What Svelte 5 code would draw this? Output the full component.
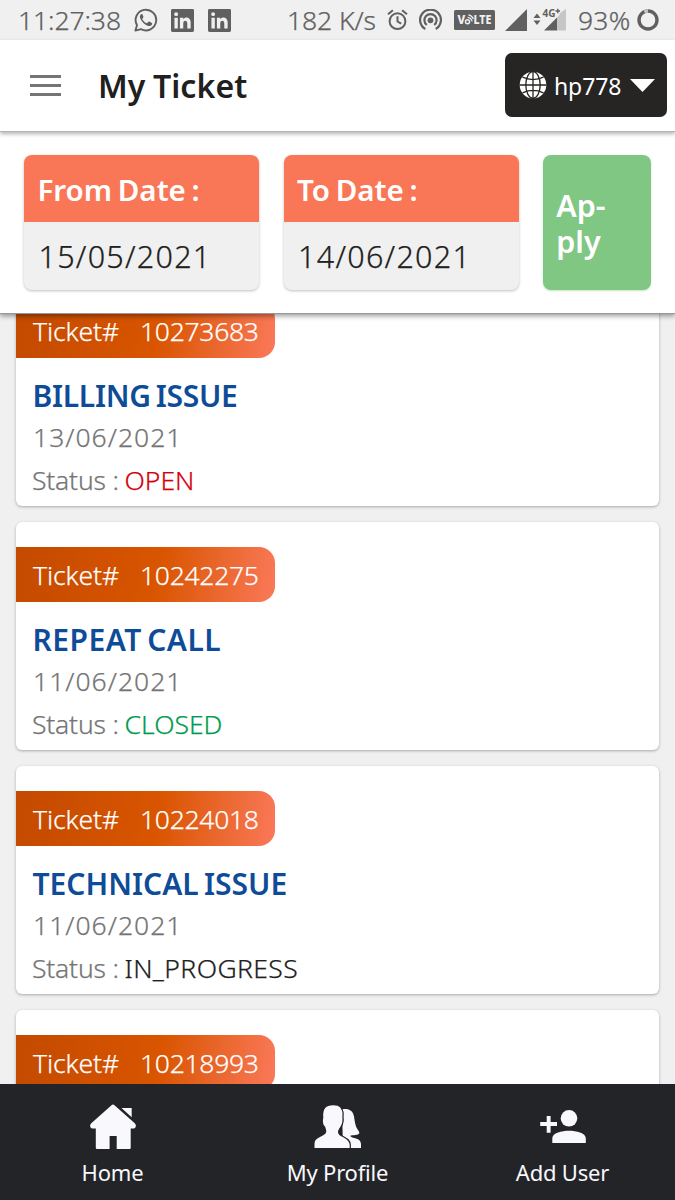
<script>
  const tickets = [
    { id: '10273683', title: 'BILLING ISSUE', date: '13/06/2021', status: 'OPEN', kind: 'open', fit: 'billing' },
    { id: '10242275', title: 'REPEAT CALL', date: '11/06/2021', status: 'CLOSED', kind: 'closed', fit: 'repeat' },
    { id: '10224018', title: 'TECHNICAL ISSUE', date: '11/06/2021', status: 'IN_PROGRESS', kind: 'progress', fit: 'technical' },
    { id: '10218993' }
  ];
</script>

{#snippet linkedin()}
  <svg class="linkedin" width="23" height="23" viewBox="0 0 24 24">
    <path fill="#606060" fill-rule="evenodd" d="M1.5 0h21A1.5 1.5 0 0 1 24 1.500v21a1.500 1.500 0 0 1-1.500 1.500h-21A1.500 1.500 0 0 1 0 22.500v-21A1.500 1.500 0 0 1 1.500 0zM3.600 9v11.400h3.500V9zM5.350 3.300a2.050 2.050 0 1 0 0 4.100 2.050 2.050 0 0 0 0-4.100zM9.300 9v11.400h3.500v-5.600c0-3.500 4.200-3.400 4.200 0v5.600h3.500v-6.600c0-5.600-5.700-6.200-7.700-3.200V9z" />
  </svg>
{/snippet}

<div class="screen">
  <div class="statusbar">
    <span class="time">11:27:38</span>
    <svg class="whatsapp" width="24" height="24" viewBox="0 0 24 24">
      <path d="M1.400 22.600 3 17.200A10.300 10.300 0 1 1 7 21.100Z" fill="none" stroke="#606060" stroke-width="1.900" stroke-linejoin="round" />
      <path d="M8.500 6.400c-.5-.5-1.100-.4-1.600.1-1 1-1.300 2.300-.7 3.800 1.500 3.700 4.300 6.300 7.900 7.600 1.500.5 3.100-.2 3.800-1.500.3-.7.3-1.200 0-1.500l-2.600-1.300c-.4-.2-.7-.1-1 .2l-1 1.200c-.2.300-.5.300-.9.100-1.800-.8-3-2-4-3.600-.2-.4-.1-.6.100-.9l.8-1c.2-.3.200-.5.100-.8z" fill="#606060" />
    </svg>
    {@render linkedin()}
    {@render linkedin()}
    <span class="speed">182 K/s</span>
    <svg class="alarm" width="21" height="22" viewBox="0 0 21 22" fill="none" stroke="#606060">
      <circle cx="10.500" cy="12.200" r="7.900" stroke-width="2" />
      <path d="M10.500 7.300v5.200l3.700 2.200M1 5.300 5.900 1.200M20 5.300 15.100 1.200" stroke-width="2" />
    </svg>
    <svg class="hotspot" width="23" height="22" viewBox="0 0 23 22">
      <g fill="none" stroke="#606060" stroke-width="2.200">
        <path d="M6.300 20A10.400 10.400 0 1 1 16.700 20" />
        <path d="M7.800 16A6.100 6.100 0 1 1 15.200 16" />
      </g>
      <circle cx="11.500" cy="11.300" r="2.900" fill="#606060" />
    </svg>
    <svg class="volte" width="41" height="20" viewBox="0 0 41 20">
      <rect width="41" height="20" rx="1.500" fill="#606060" />
      <g fill="#f0f0f0" font-family="Noto Sans, sans-serif" font-weight="800" font-size="11.500">
        <text x="3.500" y="14.200">V</text>
        <text x="19.500" y="14.200" textLength="18" lengthAdjust="spacingAndGlyphs">LTE</text>
      </g>
      <circle cx="13.500" cy="11.700" r="2" fill="none" stroke="#f0f0f0" stroke-width="1.500" />
      <path d="M13.500 7.300q3.800.3 4.600 4.200M14.500 4.800q3.500.6 4.900 4.200" fill="none" stroke="#f0f0f0" stroke-width="1.200" />
    </svg>
    <svg class="signal" width="22" height="22" viewBox="0 0 22 22"><path d="M0 22 22 0v22z" fill="#606060" /></svg>
    <svg class="mobile" width="34" height="24" viewBox="0 0 34 24">
      <path d="M.5 11 4 6.500 7.500 11zM.5 13.500h7L4 18z" fill="#606060" />
      <path d="M24 10.500 26.500 8V6.500L31.500 3 33 1.500v22h-9z" fill="#c6c6c6" />
      <path d="M11 23.500 24 10.500v13z" fill="#606060" />
      <text x="9.500" y="9.500" textLength="13" lengthAdjust="spacingAndGlyphs" font-family="Noto Sans, sans-serif" font-weight="700" font-size="10" fill="#606060">4G</text>
      <path d="M22.500 4h4.600M24.800 1.700v4.600" stroke="#606060" stroke-width="1.400" />
    </svg>
    <span class="battery">93%</span>
    <svg class="ring" width="22" height="22" viewBox="0 0 22 22" fill="none" stroke-width="3.400">
      <circle cx="11" cy="11" r="9" stroke="#606060" />
      <path d="M7.300 2.800A9 9 0 0 1 11 2" stroke="#c2c2c2" />
    </svg>
  </div>

  <header>
    <div class="menu"><i></i><i></i><i></i></div>
    <h1>My Ticket</h1>
    <div class="account">
      <svg width="28" height="28" viewBox="0 0 28 28">
        <circle cx="14" cy="14" r="13.300" fill="#fff" />
        <g fill="none" stroke="#272523" stroke-width="1.300">
          <path d="M14 .7v26.600M.7 14h26.600M3.500 6.200Q14 11 24.500 6.200M3.500 21.800Q14 17 24.500 21.800" />
          <ellipse cx="14" cy="14" rx="7.200" ry="13.300" />
        </g>
      </svg>
      <span>hp778</span>
      <svg width="25" height="13" viewBox="0 0 25 13"><path d="M0 0h25L12.500 13z" fill="#fff" /></svg>
    </div>
  </header>

  <section class="filters">
    <div class="date"><b>From Date :</b><span>15/05/2021</span></div>
    <div class="date to"><b>To Date :</b><span>14/06/2021</span></div>
    <div class="apply">Ap-<br />ply</div>
  </section>

  <main>
    {#each tickets as t}
      <article>
        <div class="ribbon"><span class="tag">Ticket#</span><span class="num">{t.id}</span></div>
        {#if t.title}
          <h2 class={t.fit}>{t.title}</h2>
          <div class="day">{t.date}</div>
          <div class="state"><span class="label">Status :</span><span class={t.kind}>{t.status}</span></div>
        {/if}
      </article>
    {/each}
  </main>

  <nav>
    <div class="tab">
      <svg width="46" height="46" viewBox="0 0 46 46" fill="#f8f8fd">
        <path d="M21.500 1.200Q23 -.2 24.500 1.200L45 19.500Q46.500 21.500 45.500 23.300Q44.800 24.500 43.500 24.500H40.700V43.800Q40.700 45 39.500 45H26.700V32H19.600V45H7Q5.800 45 5.800 43.800V24.500H2.500Q1.200 24.500 .5 23.300Q-.5 21.500 1 19.500Z" />
        <path d="M31.500 4H41.700V13.200Z" />
      </svg>
      <span>Home</span>
    </div>
    <div class="tab">
      <svg width="48" height="46" viewBox="-1 0 48 46">
        <path fill="#f8f8fd" d="M27 5.500C33 4.200 37.500 6 38.900 12C40 18 40 22 43.300 26.500C45.300 29 44.500 30.600 40.500 31C38 31.300 36 31 35.200 32C36.500 34.500 46 33.500 46 40V44H28Z" />
        <path fill="#f8f8fd" d="M-.5 44V40C-.5 33.500 7 33 10.500 29.500C12 28 11 25 10 22.500C8 21 7.500 17 8.300 14C7.500 4.500 11 1.200 18 1.200C25 1.200 28 4.500 27.400 11C27.300 15 29 19 25.500 23C23.500 26 22 28.500 25 31C29 33.500 34.700 35 34.700 41V44Z" />
        <path fill="none" stroke="#232428" stroke-width="1.200" d="M26 3.500Q28.800 7.500 28 12.500C28.600 17 28 20 26 23C24 26 22.500 28 24.800 30.500C28.500 33.500 35.300 34.500 35.300 41V44.500" />
      </svg>
      <span>My Profile</span>
    </div>
    <div class="tab">
      <svg width="46" height="46" viewBox="0 0 46 46" fill="#f8f8fd">
        <circle cx="29" cy="14.300" r="8.300" />
        <path d="M12.300 39V34.500C12.300 28.500 22 26.700 29 26.700S45.800 28.500 45.800 34.500V39ZM.2 18H6.700V12H10.600V18H17V22H10.600V28.700H6.700V22H.2Z" />
      </svg>
      <span>Add User</span>
    </div>
  </nav>
</div>

<style>
  :global(body) { margin: 0; }
  .screen {
    width: 675px; height: 1200px; display: flex; flex-direction: column; overflow: hidden;
    background: #f0f0f0; font-family: "Noto Sans", sans-serif; white-space: nowrap;
  }
  svg { display: block; flex: none; }
  h1, h2 { margin: 0; }

  .statusbar {
    height: 40px; flex: none; display: flex; align-items: center; box-sizing: border-box;
    padding-left: 18px; color: #606060; font-size: 26.500px; font-weight: 300; line-height: 40px;
    -webkit-text-stroke: .25px currentColor;
  }
  .statusbar span { flex: none; }
  .time { width: 116px; letter-spacing: -0.1px; }
  .linkedin { margin-left: 13px; }
  .linkedin + .linkedin { margin-left: 14px; }
  .speed { width: 92px; margin-left: 56px; letter-spacing: -0.1px; }
  .statusbar svg { -webkit-text-stroke: 0; }
  .alarm { margin-left: 8px; }
  .hotspot { margin-left: 11px; }
  .volte { margin-left: 12px; }
  .signal { margin-left: 10px; }
  .mobile { margin-left: 6px; margin-top: -2px; }
  .battery { width: 55px; margin-left: 11px; letter-spacing: .2px; }
  .ring { margin-left: 4px; }

  header {
    height: 92px; flex: none; display: flex; align-items: center; box-sizing: border-box;
    padding: 0 8px 0 30px; background: #fff; position: relative; z-index: 3;
    border-bottom: 1px solid #b4b4b4; box-shadow: 0 2px 4px rgba(0, 0, 0, .3);
  }
  .menu { width: 31px; display: grid; gap: 6px; margin-top: -1px; }
  .menu i { height: 3px; background: #757575; }
  h1 { margin-left: 37px; font-size: 32px; font-weight: 600; line-height: 40px; color: #202020; letter-spacing: 0.1px; word-spacing: -1px; }
  .account {
    width: 162px; height: 64px; margin-left: auto; margin-top: -1px; border-radius: 7px; background: #272523;
    display: flex; align-items: center; box-sizing: border-box; padding: 0 12px 0 14px; color: #fff;
  }
  .account span { margin-left: 7px; width: 76px; font-size: 23px; line-height: 30px; letter-spacing: -.1px; padding-top: 1px; }

  .filters {
    height: 182px; flex: none; display: flex; align-items: flex-start; box-sizing: border-box;
    padding: 23.400px 24px 0; gap: 24.300px; background: #fff; position: relative; z-index: 2;
    border-bottom: 1px solid #999; box-shadow: 0 2px 5px rgba(0, 0, 0, .4);
  }
  .date {
    width: 235.300px; height: 134.500px; display: flex; flex-direction: column; overflow: hidden;
    border-radius: 8px; background: #f0f0f0; box-shadow: 0 1px 3px rgba(0, 0, 0, .25); flex: none;
  }
  .date b {
    height: 67px; padding-left: 13.500px; background: #f97756; color: #fff; font-size: 29.500px; font-weight: 600;
    line-height: 70px; word-spacing: -2px;
  }
  .date span {
    padding-left: 14.500px; color: #202020; font-size: 30.500px; font-weight: 300; line-height: 68px;
    letter-spacing: 1.250px; -webkit-text-stroke: .25px currentColor;
  }
  .apply {
    width: 107.500px; height: 134.500px; box-sizing: border-box; padding: 32px 0 0 13px; border-radius: 8px; flex: none;
    background: #81c784; color: #fff; font-size: 30.500px; font-weight: 600;
    line-height: 36px; box-shadow: 0 1px 2px rgba(80, 180, 90, .35);
  }

  main {
    flex: 1; min-height: 0; overflow: hidden; display: flex; flex-direction: column; gap: 15.800px;
    box-sizing: border-box; padding: 0 16px;
  }
  article {
    height: 228px; flex: none; box-sizing: border-box; padding-top: 25px; background: #fff; border-radius: 6px;
    box-shadow: 0 1px 3px rgba(0, 0, 0, .3);
  }
  article:first-child { margin-top: -35.600px; }
  .ribbon {
    width: 259px; height: 55px; display: flex; box-sizing: border-box; padding-left: 17px; border-radius: 0 16px 16px 0;
    background: linear-gradient(100deg, #c34a00 0%, #d95500 55%, #f97756 98%);
    color: #fff; font-size: 26.500px; font-weight: 300; line-height: 56px; -webkit-text-stroke: .25px currentColor;
  }
  .tag { width: 107px; letter-spacing: -.1px; }
  .num { letter-spacing: -.3px; }
  h2 { margin: 17px 0 0 16.500px; font-size: 30px; font-weight: 600; line-height: 42px; color: #0f4c97; }
  .billing { letter-spacing: -.3px; word-spacing: -2.500px; }
  .repeat { letter-spacing: .5px; word-spacing: -3px; }
  .technical { letter-spacing: 0; word-spacing: -2.500px; }
  .day, .state { font-size: 26.500px; font-weight: 300; color: #757575; -webkit-text-stroke: .25px currentColor; }
  .day { padding-left: 17px; line-height: 40px; letter-spacing: 1px; }
  .state { display: flex; padding-left: 16px; line-height: 47px; }
  .label { width: 92.500px; letter-spacing: -.2px; }
  .open { color: #d3000d; }
  .closed { color: #009b4d; }
  .progress { color: #202020; letter-spacing: .4px; }

  nav { height: 116px; flex: none; display: grid; grid-template-columns: repeat(3, 1fr); background: #232428; position: relative; }
  .tab { display: flex; flex-direction: column; align-items: center; padding-top: 20px; color: #f8f8fd; }
  .tab span { margin-top: 7px; font-size: 22px; line-height: 30px; letter-spacing: -.2px; }
</style>
